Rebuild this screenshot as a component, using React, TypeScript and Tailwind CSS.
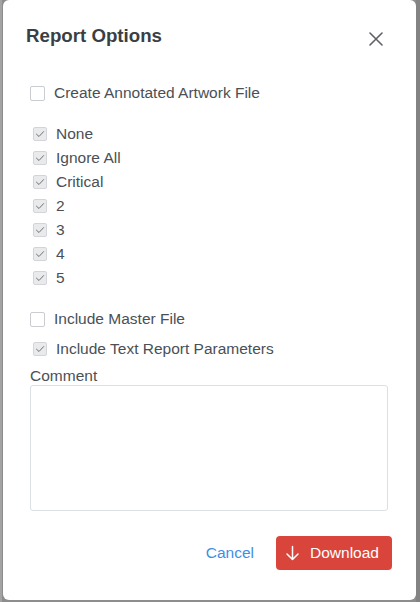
import React from "react";

const font = { fontFamily: '"Liberation Sans", Arial, sans-serif' };

function Box({ checked }: { checked?: boolean }) {
  if (checked) {
    return (
      <span className="flex h-[14px] w-[14px] shrink-0 items-center justify-center rounded-[2px] border border-[#d3d5d8] bg-[#e9eaeb]">
        <svg width="10" height="10" viewBox="0 0 10 10" fill="none">
          <path d="M1.5 5.2 L4 7.5 L8.6 2.6" stroke="#6e7276" strokeWidth="1" strokeLinecap="round" strokeLinejoin="round" />
        </svg>
      </span>
    );
  }
  return <span className="h-[15px] w-[15px] shrink-0 rounded-[2px] border border-[#c9cdd1] bg-white" />;
}

function Row({ label, checked, indent }: { label: string; checked?: boolean; indent?: boolean }) {
  return (
    <div className={`flex h-6 items-center gap-[9px] ${indent ? "pl-[3px]" : ""}`}>
      <Box checked={checked} />
      <span className="text-[15.5px] leading-6 text-[#4a5056]">{label}</span>
    </div>
  );
}

export default function App() {
  const levels = ["None", "Ignore All", "Critical", "2", "3", "4", "5"];
  return (
    <div className="flex h-[602px] w-[420px] bg-[#8d8d8d]" style={font}>
      <div className="w-[2px] bg-[#a3a3a3]" />
      <div className="ml-px flex h-[600px] w-[413px] flex-col rounded-md bg-white">
        <div className="flex items-start justify-between pl-[23px] pr-[33px] pt-[24px]">
          <h1 className="text-[18.7px] font-bold leading-6 text-[#3a3f44]">Report Options</h1>
          <svg className="mt-[8px]" width="14" height="14" viewBox="0 0 14 14" fill="none">
            <path d="M1 1 L13 13 M13 1 L1 13" stroke="#5d6166" strokeWidth="1.6" strokeLinecap="round" />
          </svg>
        </div>
        <div className="flex flex-col pl-[27px] pr-[28px]">
          <div className="mt-[33px]">
            <Row label="Create Annotated Artwork File" />
          </div>
          <div className="mt-[17px] flex flex-col">
            {levels.map((l) => (
              <Row key={l} label={l} checked indent />
            ))}
          </div>
          <div className="mt-[17px]">
            <Row label="Include Master File" />
          </div>
          <div className="mt-[6px]">
            <Row label="Include Text Report Parameters" checked indent />
          </div>
          <label className="mt-[5px] h-[19px] text-[15.5px] leading-[19px] text-[#4a5056]">Comment</label>
          <textarea className="h-[126px] w-[358px] resize-none rounded-[3px] border border-[#dcdfe3] outline-none" />
        </div>
        <div className="mt-[25px] flex items-center justify-end gap-[22px] pr-[24px]">
          <span className="text-[15.5px] text-[#3d8fe8]">Cancel</span>
          <button className="flex h-[34px] w-[116px] items-center gap-[10px] rounded-[4px] bg-[#d9453b] pl-[9px] text-[15.5px] text-white">
            <svg width="15" height="16" viewBox="0 0 15 16" fill="none">
              <path d="M7.5 1.5 V14.5 M2 9 L7.5 14.5 L13 9" stroke="white" strokeWidth="1.5" strokeLinecap="round" strokeLinejoin="round" />
            </svg>
            Download
          </button>
        </div>
      </div>
      <div className="flex-1 bg-[#838383]" />
    </div>
  );
}
